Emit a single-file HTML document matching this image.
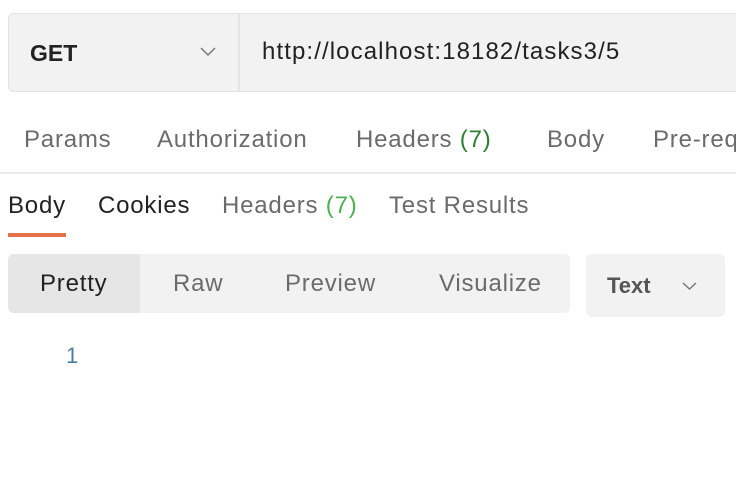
<!DOCTYPE html>
<html><head><style>
body{margin:0;width:736px;height:490px;background:#fff;font-family:"Liberation Sans",sans-serif;position:relative;overflow:hidden}
.a{position:absolute;white-space:nowrap}
.t{font-size:24px;letter-spacing:0.8px;line-height:28px}
</style></head><body>
<div class="a" style="left:8px;top:13px;width:740px;height:77px;background:#f2f2f2;border:1px solid #e2e2e2;border-radius:6px"></div>
<div class="a" style="left:238px;top:14px;width:2px;height:77px;background:#e4e4e4"></div>
<div class="a" style="left:30px;top:39px;font-size:23px;line-height:28px;font-weight:bold;color:#222">GET</div>
<svg class="a" style="left:200px;top:47px" width="16" height="10"><path d="M1 1L8 8L15 1" fill="none" stroke="#777" stroke-width="1.5"/></svg>
<div class="a t" style="left:262px;top:38px;color:#222;letter-spacing:1.1px">http://localhost:18182/tasks3/5</div>

<div class="a t" style="top:126px;color:#6b6b6b;left:24px">Params</div>
<div class="a t" style="top:126px;color:#6b6b6b;left:157px">Authorization</div>
<div class="a t" style="top:126px;color:#6b6b6b;left:356px">Headers <span style="color:#2e7d32">(7)</span></div>
<div class="a t" style="top:126px;color:#6b6b6b;left:547px">Body</div>
<div class="a t" style="top:126px;color:#6b6b6b;left:653px">Pre-req</div>
<div class="a" style="left:0;top:172px;width:736px;height:2px;background:#ebebeb"></div>

<div class="a t" style="top:192px;color:#222;left:8px">Body</div>
<div class="a t" style="top:192px;color:#222;left:98px">Cookies</div>
<div class="a t" style="top:192px;color:#6b6b6b;left:222px">Headers <span style="color:#4caf50">(7)</span></div>
<div class="a t" style="top:192px;color:#6b6b6b;left:389px">Test Results</div>
<div class="a" style="left:8px;top:233px;width:58px;height:4px;background:#e4714a"></div>

<div class="a" style="left:8px;top:254px;width:562px;height:59px;background:#f2f2f2;border-radius:6px;overflow:hidden"><div style="width:132px;height:59px;background:#e6e6e6"></div></div>
<div class="a t" style="top:270px;color:#222;left:40px">Pretty</div>
<div class="a t" style="top:270px;color:#6b6b6b;left:173px">Raw</div>
<div class="a t" style="top:270px;color:#6b6b6b;left:285px">Preview</div>
<div class="a t" style="top:270px;color:#6b6b6b;left:439px">Visualize</div>

<div class="a" style="left:586px;top:254px;width:139px;height:63px;background:#f2f2f2;border-radius:6px"></div>
<div class="a" style="top:273px;font-size:22px;line-height:26px;font-weight:bold;color:#555;left:607px">Text</div>
<svg class="a" style="left:682px;top:282px" width="15" height="9"><path d="M1 1L7.5 7L14 1" fill="none" stroke="#777" stroke-width="1.4"/></svg>

<div class="a" style="top:342px;font-size:22px;line-height:28px;color:#4a7fa0;left:66px">1</div>
</body></html>
